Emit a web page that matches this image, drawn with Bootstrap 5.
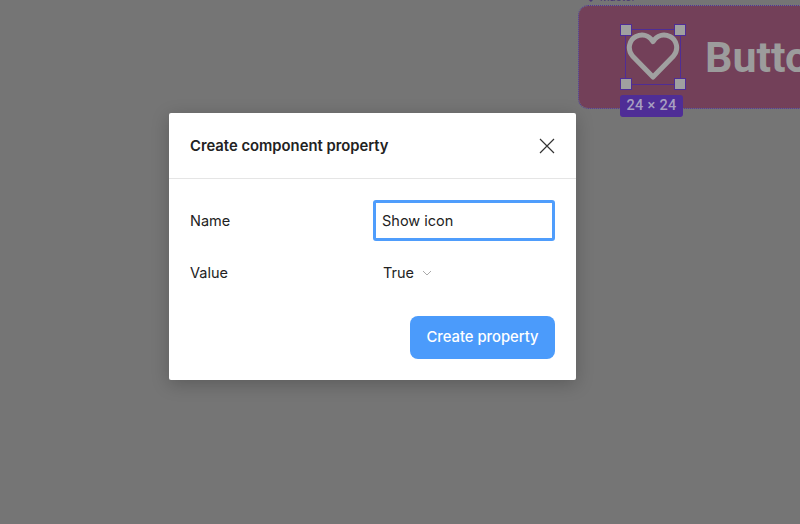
<!DOCTYPE html>
<html lang="en">
<head>
  <meta charset="UTF-8" />
  <meta name="viewport" content="width=device-width, initial-scale=1.0"/>
  <title>Create component property</title>
  <link href="https://cdn.jsdelivr.net/npm/bootstrap@5.3.0/dist/css/bootstrap.min.css" rel="stylesheet"/>
  <style>
    html, body { height: 100%; }
    body { background: #757575; font-family: Inter, "Liberation Sans", sans-serif; color: #222; overflow: hidden; }
    .stage { position: relative; width: 800px; height: 524px; padding: 113px 0 0 169px; overflow: hidden; }

    /* canvas behind the dialog */
    .frame-box { position: absolute; left: 579px; top: 6px; width: 260px; height: 102px; background: #734059; border-radius: 9px; outline: 1px dotted #53309a; outline-offset: 0; }
    .frame-label { position: absolute; left: 585px; top: -9px; font-size: 11px; line-height: 12px; color: #4a3a73; }
    .frame-text { position: absolute; left: 705px; top: 32px; font-family: Roboto, sans-serif; font-weight: 700; font-size: 43px; line-height: 50px; color: #9c9c9c; white-space: nowrap; }
    .heart-sel { position: absolute; left: 625px; top: 29px; width: 56px; height: 56px; border: 1px solid #4f2d96; }
    .heart-sel svg { position: absolute; left: 0; top: 0; }
    .sel-handle { position: absolute; width: 12px; height: 12px; background: #a0a0a0; border: 1px solid #4f2d96; }
    .h-tl { left: -6px; top: -6px; }
    .h-tr { right: -6px; top: -6px; }
    .h-bl { left: -6px; bottom: -6px; }
    .h-br { right: -6px; bottom: -6px; }
    .size-tag { position: absolute; left: 620px; top: 95px; width: 63px; height: 22px; border-radius: 3px; background: #4f2d96; color: #a79fc0; font-family: Roboto, sans-serif; font-weight: 500; font-size: 14.5px; line-height: 22px; text-align: center; letter-spacing: .3px; }

    /* dialog */
    .prop-dialog { position: relative; width: 407px; height: 267px; background: #fff; border: 0; border-radius: 2px; box-shadow: 0 4px 18px rgba(0,0,0,.22); }
    .prop-dialog .modal-header { height: 66px; padding: 0 21px; border-bottom: 1px solid #e5e5e5; }
    .prop-title { margin: 2px 0 0; font-size: 14.8px; font-weight: 600; color: #222; }
    .x-btn { line-height: 0; border: 0; background: none; padding: 0; }
    .prop-dialog .modal-body { padding: 21px; }
    .prop-row { display: flex; align-items: center; font-size: 14.5px; }
    .prop-label { width: 183px; }
    .name-input { width: 182px; height: 41px; padding: 0 6px; font-size: 14.5px; color: #222; border: 3px solid #4f9dfc; border-radius: 3px; box-shadow: none; }
    .name-input:focus { border-color: #4f9dfc; box-shadow: none; }
    .value-row { margin-top: 11px; height: 41px; }
    .value-pick { padding-left: 10px; display: flex; align-items: center; gap: 8px; }
    .create-btn { width: 145px; height: 43px; padding: 0; font-size: 14.8px; font-weight: 500; color: #fff; background: #4b9bfb; border: 0; border-radius: 8px; }
    .btn-row { margin-top: 23px; }
  </style>
</head>
<body>
  <div class="stage">
    <div class="frame-label">&#9670; Master</div>
    <div class="frame-box"></div>
    <div class="frame-text">Button</div>
    <div class="heart-sel">
      <svg width="56" height="56" viewBox="0 0 56 56" fill="none" stroke="#a0a0a0" stroke-width="5" stroke-linejoin="round">
        <path d="M27 47 L6.5 26 C1 19.5 3 10 10 6.5 C16.5 3.5 23 5.5 27 11.5 C31 5.5 37.5 3.5 44 6.5 C51 10 53 19.5 47.5 26 Z"/>
      </svg>
      <span class="sel-handle h-tl"></span>
      <span class="sel-handle h-tr"></span>
      <span class="sel-handle h-bl"></span>
      <span class="sel-handle h-br"></span>
    </div>
    <div class="size-tag">24 × 24</div>

    <div class="modal-content prop-dialog">
      <div class="modal-header d-flex justify-content-between align-items-center">
        <h5 class="prop-title">Create component property</h5>
        <button type="button" class="x-btn">
          <svg width="16" height="16" viewBox="0 0 16 16" stroke="#333" stroke-width="1.2" fill="none"><path d="M1 1 L15 15 M15 1 L1 15"/></svg>
        </button>
      </div>
      <div class="modal-body">
        <div class="prop-row">
          <div class="prop-label">Name</div>
          <input type="text" class="form-control name-input" value="Show icon" />
        </div>
        <div class="prop-row value-row">
          <div class="prop-label">Value</div>
          <div class="value-pick">True
            <svg width="10" height="6" viewBox="0 0 10 6" fill="none" stroke="#aaa" stroke-width="1"><path d="M1 1 L5 5 L9 1"/></svg>
          </div>
        </div>
        <div class="d-flex justify-content-end btn-row">
          <button type="button" class="btn create-btn">Create property</button>
        </div>
      </div>
    </div>
  </div>
  <script src="https://cdn.jsdelivr.net/npm/bootstrap@5.3.0/dist/js/bootstrap.bundle.min.js"></script>
</body>
</html>
